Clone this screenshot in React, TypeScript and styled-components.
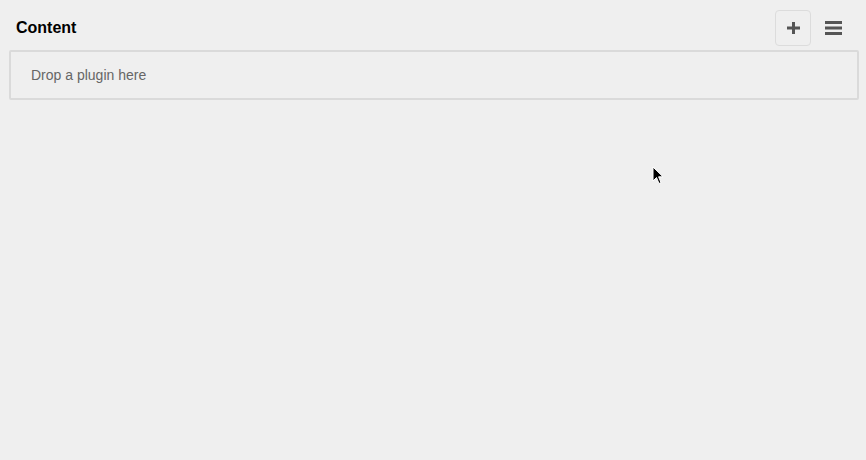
import styled, { createGlobalStyle } from "styled-components";

const GlobalStyle = createGlobalStyle`
  html, body {
    margin: 0;
    padding: 0;
    background: #efefef;
  }
  body {
    font-family: "Liberation Sans", Arial, Helvetica, sans-serif;
    min-height: 460px;
  }
`;

const Page = styled.div`
  position: relative;
  min-height: 460px;
  background: #efefef;
`;

const Header = styled.header`
  display: flex;
  align-items: center;
  justify-content: space-between;
  padding: 10px 15px 0 16px;
`;

const Title = styled.h2`
  margin: 0;
  font-size: 16px;
  font-weight: bold;
  color: #000;
  line-height: 36px;
`;

const Actions = styled.div`
  display: flex;
  align-items: center;
  gap: 4px;
`;

const IconButton = styled.button<{ $outlined?: boolean }>`
  display: flex;
  align-items: center;
  justify-content: center;
  width: 36px;
  height: 36px;
  padding: 0;
  background: transparent;
  border: 1px solid ${(p) => (p.$outlined ? "#dcdcdc" : "transparent")};
  border-radius: 4px;
  cursor: pointer;
`;

const DropZone = styled.div`
  margin: 4px 7px 0 9px;
  height: 46px;
  border: 2px solid #dadada;
  border-radius: 2px;
  display: flex;
  align-items: center;
  padding-left: 20px;
  font-size: 14px;
  color: #666;
`;

// mouse pointer captured in the screenshot
const Pointer = styled.svg`
  position: absolute;
  left: 652px;
  top: 166px;
  pointer-events: none;
`;

const PlusIcon = () => (
  <svg width="13" height="12" viewBox="0 0 13 12">
    <rect x="0" y="4.5" width="13" height="3" fill="#555" />
    <rect x="5" y="0" width="3" height="12" fill="#555" />
  </svg>
);

const MenuIcon = () => (
  <svg width="17" height="14" viewBox="0 0 17 14">
    <rect x="0" y="0" width="17" height="3" fill="#555" />
    <rect x="0" y="5.5" width="17" height="3" fill="#555" />
    <rect x="0" y="11" width="17" height="3" fill="#555" />
  </svg>
);

export default function App() {
  return (
    <Page>
      <GlobalStyle />
      <Header>
        <Title>Content</Title>
        <Actions>
          <IconButton $outlined aria-label="Add plugin">
            <PlusIcon />
          </IconButton>
          <IconButton aria-label="Menu">
            <MenuIcon />
          </IconButton>
        </Actions>
      </Header>
      <DropZone>Drop a plugin here</DropZone>
      <Pointer width="12" height="20" viewBox="0 0 12 20">
        <path
          d="M1 1 L1 15 L4.5 11.5 L7 17.5 L9 16.6 L6.6 10.8 L11 10.8 Z"
          fill="#000"
          stroke="#fff"
          strokeWidth="1"
          strokeLinejoin="round"
        />
      </Pointer>
    </Page>
  );
}
